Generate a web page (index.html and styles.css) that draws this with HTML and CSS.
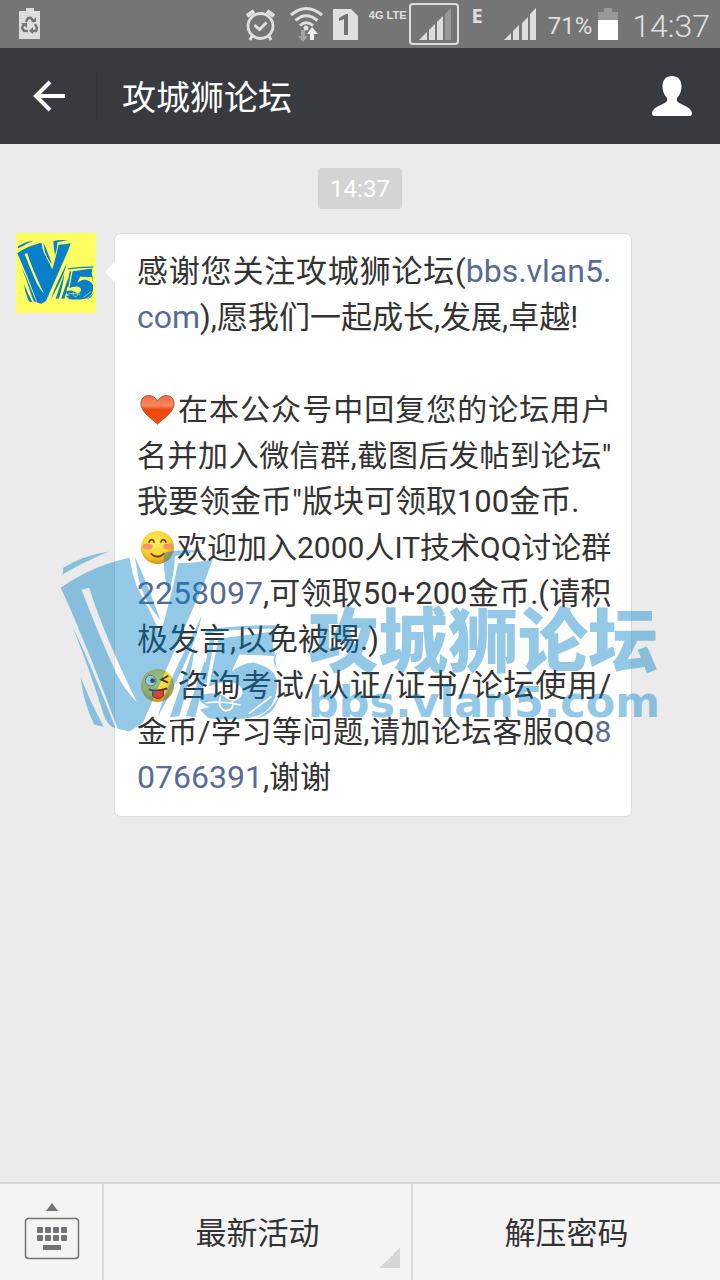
FILE: index.html
```html
<!DOCTYPE html>
<html lang="zh-CN">
<head>
<meta charset="utf-8">
<meta name="viewport" content="width=device-width, initial-scale=1">
<title>攻城狮论坛</title>
<link rel="stylesheet" href="styles.css">
</head>
<body>
<svg class="defs" width="0" height="0" aria-hidden="true">
  <symbol id="v5" viewBox="30 50 670 566">
    <path d="M38 132L40 112Q100 75 178 63Q100 95 38 132Z"/>
    <path fill-rule="evenodd" d="M32 172Q130 105 240 82Q246 125 262 170Q300 235 332 310L345 270L372 165L386 98Q440 98 491 86Q470 150 440 215L280 580L240 606L204 598Q135 410 96 320Q62 235 32 172ZM95 178L118 172Q165 320 262 517Q225 480 200 430Q145 310 95 178Z"/>
    <path d="M256 80Q280 125 333 270Q285 215 268 150Z"/>
    <path d="M343 66Q400 54 466 62Q410 66 376 78Q378 120 357 190Q342 130 343 66Z"/>
    <path d="M68 290Q115 385 198 596Q172 590 160 550Q120 420 68 290Z"/>
    <path d="M92 440Q118 510 162 592L134 586Q100 520 92 440Z"/>
    <path d="M457 258Q440 350 325 562Q340 500 400 375Z"/>
    <path d="M436 345Q432 420 390 560L362 562Q390 480 436 345Z"/>
    <path d="M466 395L480 400L438 562L410 560Z"/>
    <path d="M470 300Q570 284 690 286L682 296Q570 294 466 312Z"/>
    <path d="M508 326L676 304Q666 340 680 378L572 374L548 425Q580 400 612 398Q690 415 685 470Q680 530 640 552Q590 578 478 566L452 540L480 532Q440 515 456 496Q510 482 532 506Q560 528 580 494Q584 466 550 457Q510 455 480 470Z"/>
    <path d="M482 326L496 328L472 460L460 458Z"/>
    <path d="M688 365Q672 390 688 420Q662 390 688 365ZM690 500Q680 555 625 566Q672 540 690 500Z"/>
    <path class="scratch" d="M514 500Q504 535 530 544Q558 540 550 514M470 520Q520 512 575 526M600 552L668 500"/>
  </symbol>
</svg>

<div class="status">
  <svg class="s-recycle" width="22" height="32" viewBox="0 0 22 32"><path fill="#ddd" d="M0 3h7V0h8v3h6v28H0z"/><g fill="none" stroke="#757575" stroke-width="2.4"><path d="M7 14l2-4h3l3 4M5 16l-2 4 2 3h4M12 23h5l1-3-2-4"/></g><path fill="#757575" d="M12 14h5v-5zM2 15h6l0 5zM14 19v7l-4-3z"/></svg>
  <svg width="31" height="33" viewBox="0 0 31 33"><g fill="none" stroke="#e0e0e0" stroke-width="2.8"><circle cx="15.500" cy="18" r="12.500"/><path d="M9.500 17l5 4.500 7-7M7 28l-2 4M24 28l2 4"/><path stroke-width="4" d="M2 8l7-5M29 8l-7-5"/></g></svg>
  <svg class="s-wifi" width="33" height="36" viewBox="0 0 33 36"><g fill="none" stroke="#e0e0e0" stroke-width="3"><path d="M1 9Q16 -4 32 9M5.500 14.500Q16 5 27.500 14.500M10 19.500Q16 14 23 19.500"/></g><circle cx="16" cy="22" r="2.500" fill="#e0e0e0"/><path fill="#a4a4a4" d="M11 24h4v6h3l-5 6-5-6h3z"/><path fill="#eee" d="M20 34h4v-6h4l-6-7-5 7h3z"/></svg>
  <svg class="s-sim" width="25" height="31" viewBox="0 0 25 31"><path fill="#e0e0e0" d="M0 0h18l7 7v24H0z"/><path fill="#707070" d="M6 9l7-4h2v21h-4V10l-5 2z"/></svg>
  <span class="net">4G LTE</span>
  <svg class="s-sig1" width="50" height="42" viewBox="0 0 50 42"><rect x="1" y="1" width="48" height="40" rx="3" fill="none" stroke="#ddd" stroke-width="2"/><path fill="#ddd" d="M10 37l8-8v8zM20 27l6-6v16h-6zM28 19l6-6v24h-6z"/><path fill="#999" d="M36 11l6-6v32h-6z"/></svg>
  <span class="edge">E</span>
  <svg class="s-sig2" width="32" height="32" viewBox="0 0 32 32"><path fill="#ddd" d="M0 32l7-7v7zM9 23l6-6v15H9zM18 15l6-6v23h-6zM26 6l6-6v32h-6z"/></svg>
  <span class="pct">71%</span>
  <svg class="s-bat" width="20" height="32" viewBox="0 0 20 32"><path fill="#999" d="M0 4h6V0h8v4h6v8H0z"/><path fill="#fff" d="M0 12h20v20H0z"/></svg>
  <time class="clock">14:37</time>
</div>

<header class="bar">
  <button class="back" aria-label="返回"><svg width="34" height="34" viewBox="0 0 34 34"><path fill="none" stroke="#fff" stroke-width="4" d="M18 3L4 17l14 14M4 17h29"/></svg></button>
  <h1>攻城狮论坛</h1>
  <button class="profile" aria-label="资料"><svg width="42" height="42" viewBox="0 0 42 42"><path fill="#fff" d="M21 1c6 0 9.500 4 9.500 10 0 5-1.500 9-4.500 12v3c3 4 14 5 15 12q0 3-2 3H3q-2 0-2-3c1-7 12-8 15-12v-3c-3-3-4.500-7-4.500-12C11.500 5 15 1 21 1z"/></svg></button>
</header>

<main class="chat">
  <time class="stamp">14:37</time>
  <div class="row">
    <svg class="avatar" viewBox="0 0 80 80" role="img" aria-label="V5"><rect width="80" height="80" fill="#ffff62"/><use href="#v5" x="1" y="5" width="78" height="68"/></svg>
    <div class="bubble">
      <p><span class="full">感谢您关注攻城狮论坛(<a href="#bbs">bbs.vlan5.</a></span><a href="#bbs">com</a>),愿我们一起成长,发展,卓越!</p>
      <p class="gap"><span class="full tight"><svg class="emo" viewBox="0 0 36 36"><defs><linearGradient id="h" x2="0" y2="1"><stop offset="0" stop-color="#f36b45"/><stop offset=".35" stop-color="#f58a5c"/><stop offset=".5" stop-color="#ee4511"/><stop offset="1" stop-color="#f4550f"/></linearGradient></defs><path fill="url(#h)" stroke="#cf4520" d="M18 33C12 27 1 21 1 12 1 2 13 1 18 9c5-8 17-7 17 3 0 9-11 15-17 21z"/></svg>在本公众号中回复您的论坛用户</span><span class="full tight">名并加入微信群,截图后发帖到论坛"</span>我要领金币"版块可领取100金币.</p>
      <p><span class="full tight"><svg class="emo" viewBox="0 0 36 36"><defs><radialGradient id="f" cx=".45" cy=".35" r=".65"><stop offset="0" stop-color="#fff15c"/><stop offset=".65" stop-color="#fbd02f"/><stop offset="1" stop-color="#d99016"/></radialGradient></defs><circle cx="18" cy="18" r="17" fill="url(#f)"/><ellipse cx="8" cy="17" rx="5" ry="3" fill="#f7936b"/><ellipse cx="29" cy="17" rx="5" ry="3" fill="#f7936b"/><path fill="none" stroke="#714018" stroke-width="1.800" d="M9 13q3-6 6 0M21 13q3-6 6 0M11 24q7 7 14 0"/></svg>欢迎加入2000人IT技术QQ讨论群</span><span class="full"><a href="#group">2258097</a>,可领取50+200金币.(请积</span>极发言,以免被踢.)</p>
      <p><span class="full"><svg class="emo" viewBox="0 0 36 36"><circle cx="18" cy="18" r="17" fill="url(#f)"/><circle cx="11" cy="13" r="5.500" fill="#fff" stroke="#9a6b20"/><circle cx="13" cy="13" r="2.500" fill="#432"/><path fill="none" stroke="#543014" stroke-width="2" d="M29 8l-7 4 7 3M9 22q9 3 19-1"/><path fill="#d43" stroke="#722" d="M13 23h11v6q-5 5-11 0z"/></svg>咨询考试/认证/证书/论坛使用/</span><span class="full tight">金币/学习等问题,请加论坛客服QQ<a href="#service">8</a></span><a href="#service">0766391</a>,谢谢</p>
    </div>
  </div>
  <div class="watermark">
    <svg class="wm-logo" viewBox="0 0 222 188"><use href="#v5" width="222" height="188"/></svg>
    <div class="wm-text"><span class="wm-name">攻城狮论坛</span><span class="wm-url">bbs.vlan5.com</span></div>
  </div>
</main>

<nav class="menu">
  <button class="keys" aria-label="键盘"><svg width="56" height="58" viewBox="0 0 56 58"><path fill="#707275" d="M22 9l6-8 6 8z"/><rect x="1.500" y="16.500" width="53" height="40" rx="3" fill="none" stroke="#707275" stroke-width="1.500"/><g fill="#707275"><rect x="13" y="25" width="6" height="6" rx="1"/><rect x="21" y="25" width="6" height="6" rx="1"/><rect x="29" y="25" width="6" height="6" rx="1"/><rect x="37" y="25" width="6" height="6" rx="1"/><rect x="13" y="33" width="6" height="6" rx="1"/><rect x="21" y="33" width="6" height="6" rx="1"/><rect x="29" y="33" width="6" height="6" rx="1"/><rect x="37" y="33" width="6" height="6" rx="1"/><path d="M19 43h18v5H19z"/></g></svg></button>
  <button class="item more">最新活动</button>
  <button class="item">解压密码</button>
</nav>
</body>
</html>
```
FILE: styles.css
```css
* { box-sizing: border-box; }

body {
  margin: 0;
  min-height: 100vh;
  display: flex;
  flex-direction: column;
  background: #ebebeb;
  color: #333;
  font-family: Roboto, "Noto Sans CJK SC", sans-serif;
}

button {
  margin: 0;
  padding: 0;
  border: 0;
  background: none;
  color: inherit;
  font: inherit;
}

svg { display: block; flex: none; }
h1, p { margin: 0; }
.defs { position: absolute; }

.status {
  height: 48px;
  padding: 0 10px 0 19px;
  display: flex;
  align-items: center;
  background: #757575;
  color: #e0e0e0;
  white-space: nowrap;
}
.s-recycle { margin-right: auto; }
.s-wifi { margin-left: 14px; }
.s-sim { margin-left: 10px; }
.net {
  align-self: flex-start;
  margin-left: 11px;
  font: bold 11px/30px "Liberation Sans", sans-serif;
}
.s-sig1 { margin-left: 2px; }
.edge {
  align-self: flex-start;
  margin-left: 13px;
  font: bold 20px/32px "Noto Sans", sans-serif;
}
.s-sig2 { margin-left: 21px; }
.pct { margin-left: 12px; padding-top: 4px; font-size: 24px; line-height: 44px; }
.s-bat { margin-left: 6px; }
.clock { margin-left: 14px; padding-top: 4px; font-size: 32px; line-height: 44px; font-weight: 300; }

.bar {
  height: 96px;
  padding-right: 27px;
  display: flex;
  align-items: center;
  background: #373a3e;
  color: #fff;
}
.back {
  width: 98px;
  height: 48px;
  padding-left: 32px;
  border-right: 2px solid #303236;
}
.bar h1 { margin-left: 24px; padding-top: 4px; font-size: 34px; font-weight: 400; line-height: 48px; }
.profile { margin-left: auto; }

.chat {
  position: relative;
  flex: 1;
  padding: 24px 16px;
  display: flex;
  flex-direction: column;
  align-items: center;
}
.stamp {
  padding: 2px 12px 0;
  border-radius: 4px;
  background: #d4d4d4;
  color: #fff;
  font-size: 24px;
  line-height: 39px;
}
.row {
  align-self: stretch;
  margin-top: 24px;
  padding-right: 73px;
  display: flex;
  align-items: flex-start;
  gap: 18px;
}
.avatar { width: 80px; height: 80px; fill: #087fca; color: #ffff62; }
.scratch { fill: none; stroke: currentColor; stroke-width: 5; }

.bubble {
  position: relative;
  flex: 1;
  padding: 15px 20px 15px 22px;
  border: 1px solid #dedede;
  border-radius: 7px;
  background: #fff;
  font-size: 31px;
  line-height: 46px;
  white-space: nowrap;
}
.bubble::before {
  content: "";
  position: absolute;
  left: -10px;
  top: 28px;
  border: solid transparent;
  border-width: 10px 10px 10px 0;
  border-right-color: #fff;
}
.bubble a { color: #576b95; font-size: 32px; line-height: 1; text-decoration: none; }
.full { display: block; text-align-last: justify; }
.tight, .tight a { font-size: 30px; }
.gap { margin-top: 46px; }
.emo { display: inline-block; width: 35px; height: 35px; margin: 0 2px 0 3px; vertical-align: -7px; }

.watermark {
  position: absolute;
  left: 60px;
  top: 403px;
  display: flex;
  align-items: flex-start;
  gap: 26px;
  color: #0081c6;
  fill: #0081c6;
  opacity: 0.42;
  pointer-events: none;
}
.wm-logo { width: 222px; height: 188px; color: #fff; }
.wm-text { padding-top: 54px; display: flex; flex-direction: column; }
.wm-name { font: 900 70px/72px "Noto Sans CJK SC", sans-serif; }
.wm-url { font: bold 43px/58px "DejaVu Sans", sans-serif; }

.menu {
  height: 98px;
  display: flex;
  border-top: 2px solid #d8d8d8;
  background: #f4f4f4;
}
.keys { width: 102px; padding: 18px 0 0 24px; display: flex; }
.item {
  position: relative;
  flex: 1;
  padding-bottom: 4px;
  border-left: 2px solid #dadada;
  font-size: 31px;
}
.more::after {
  content: "";
  position: absolute;
  right: 11px;
  bottom: 12px;
  width: 20px;
  height: 20px;
  background: linear-gradient(135deg, transparent 50%, #d6d6d6 50%);
}
```
